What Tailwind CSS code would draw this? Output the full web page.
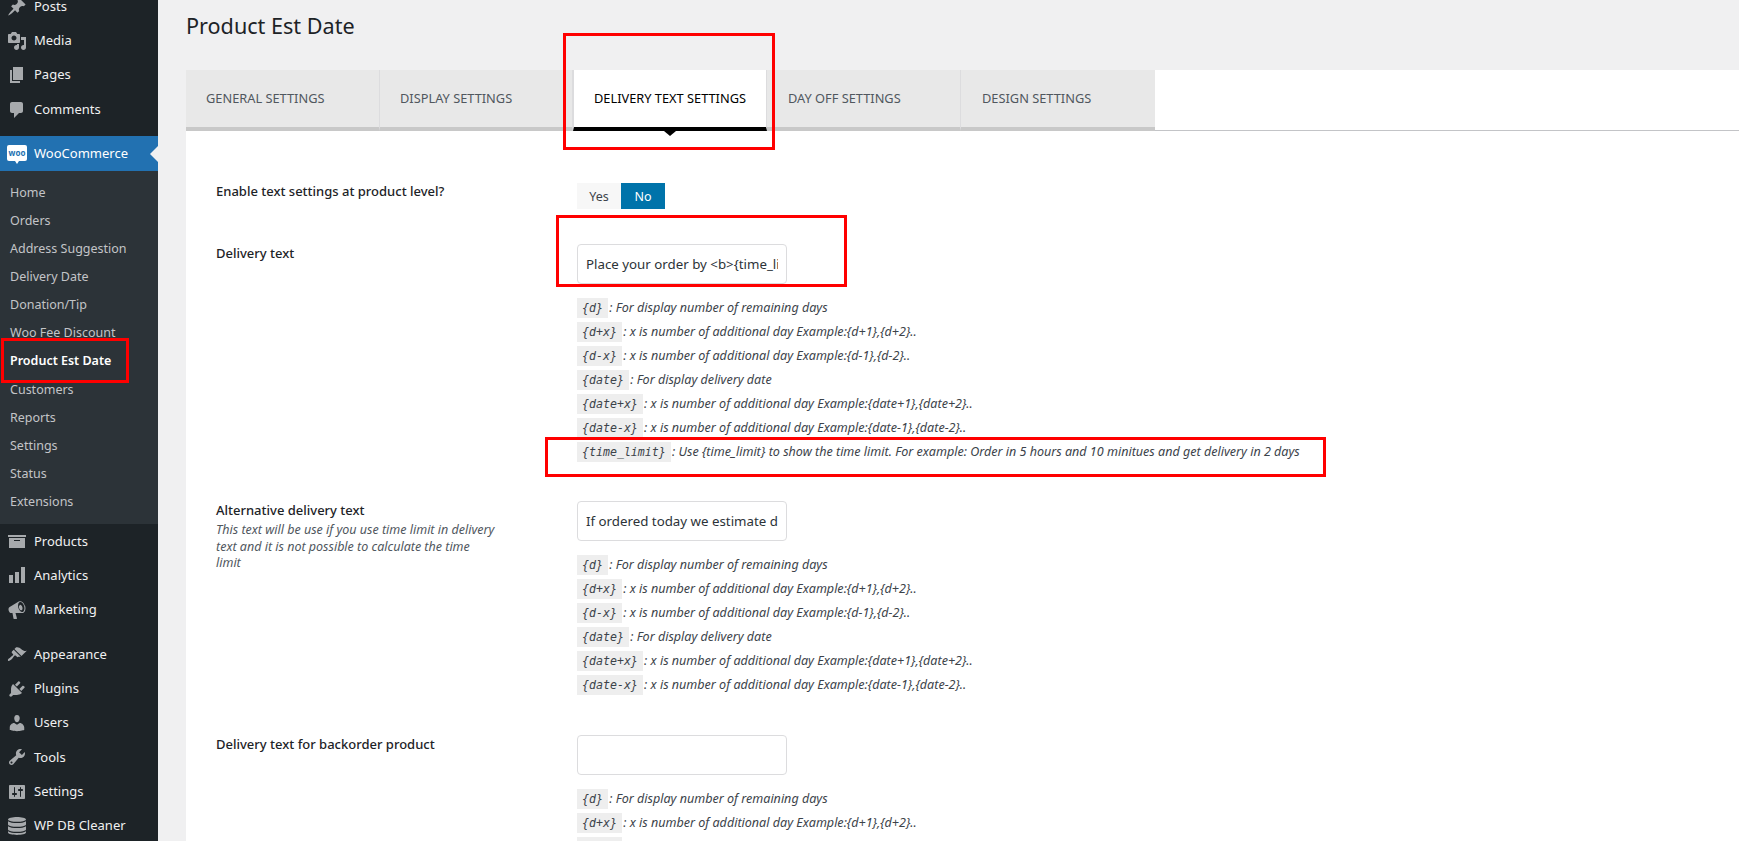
<!DOCTYPE html>
<html lang="en">
<head>
<meta charset="utf-8">
<title>Product Est Date</title>
<script src="https://cdn.jsdelivr.net/npm/@tailwindcss/browser@4"></script>
</head>
<body class="font-['Noto_Sans',sans-serif]">
<div class="relative flex h-[841px] w-[1739px] overflow-hidden bg-[#f0f0f1]">

  <aside class="h-full w-[158px] shrink-0 bg-[#1d2327] pt-0 text-[13px] text-[#f0f0f1]">
    <nav class="-mt-[10.5px]">
      <a class="flex h-[34.3px] items-center gap-[7px] pl-[7px]"><svg class="size-5 fill-[#a7aaad]" viewBox="0 0 20 20"><path d="M10.44 3.02l1.82-1.82 6.36 6.35-1.83 1.82c-1.05-.68-2.48-.57-3.41.36l-.75.75c-.92.93-1.04 2.35-.35 3.41l-1.83 1.82-2.41-2.41-2.8 2.79c-.42.42-3.38 2.71-3.8 2.29s1.86-3.39 2.28-3.81l2.79-2.79L4.1 9.36l1.83-1.82c1.05.69 2.48.57 3.4-.36l.75-.75c.93-.92 1.05-2.35.36-3.41z"/></svg>Posts</a>
      <a class="flex h-[34.3px] items-center gap-[7px] pl-[7px]"><svg class="size-5 fill-[#a7aaad]" viewBox="0 0 20 20"><path d="M13 11V4c0-.55-.45-1-1-1h-1.67L9 1H5L3.67 3H2c-.55 0-1 .45-1 1v7c0 .55.45 1 1 1h10c.55 0 1-.45 1-1zM7 4.500c1.38 0 2.500 1.120 2.500 2.500S8.380 9.500 7 9.500 4.500 8.380 4.500 7 5.620 4.500 7 4.500zM14 6h5v10.500c0 1.380-1.120 2.500-2.500 2.500S14 17.880 14 16.500s1.120-2.500 2.500-2.500c.17 0 .34.02.5.05V9h-3V6zm-4 8.050V13h2v3.500c0 1.380-1.120 2.500-2.500 2.500S7 17.880 7 16.500 8.120 14 9.500 14c.17 0 .34.02.5.05z"/></svg>Media</a>
      <a class="flex h-[34.3px] items-center gap-[7px] pl-[7px]"><svg class="size-5 fill-[#a7aaad]" viewBox="0 0 20 20"><path d="M6 15V2h10v13H6zm-1 1h8v2H3V5h2v11z"/></svg>Pages</a>
      <a class="flex h-[34.3px] items-center gap-[7px] pl-[7px]"><svg class="size-5 fill-[#a7aaad]" viewBox="0 0 20 20"><path d="M5 2h9c1.1 0 2 .9 2 2v7c0 1.1-.9 2-2 2h-2l-5 5v-5H5c-1.1 0-2-.9-2-2V4c0-1.1.9-2 2-2z"/></svg>Comments</a>
    </nav>
    <a class="relative mt-[9.5px] flex h-[35px] items-center gap-[7px] bg-[#2271b1] pl-[7px] text-white">
      <span class="relative -mt-[2px] flex h-[16px] w-5 items-center justify-center rounded-[2px] bg-white text-[8px] leading-none font-bold text-[#2271b1]">woo<span class="absolute -bottom-[3px] left-[8px] size-0 border-x-[2px] border-t-[3px] border-x-transparent border-t-white"></span></span>
      <span class="pt-px">WooCommerce</span>
      <span class="absolute top-1/2 right-0 size-0 -translate-y-1/2 border-y-[8px] border-r-[8px] border-y-transparent border-r-[#f0f0f1]"></span>
    </a>
    <ul class="h-[353px] bg-[#2c3338] pt-[8px] text-[12.5px] text-[#c3c4c7]">
      <li class="flex h-[28.1px] items-center pl-[10px]">Home</li>
      <li class="flex h-[28.1px] items-center pl-[10px]">Orders</li>
      <li class="flex h-[28.1px] items-center pl-[10px]">Address Suggestion</li>
      <li class="flex h-[28.1px] items-center pl-[10px]">Delivery Date</li>
      <li class="flex h-[28.1px] items-center pl-[10px]">Donation/Tip</li>
      <li class="flex h-[28.1px] items-center pl-[10px]">Woo Fee Discount</li>
      <li class="flex h-[28.1px] items-center pl-[10px] font-semibold text-white">Product Est Date</li>
      <li class="flex h-[28.1px] items-center pl-[10px]">Customers</li>
      <li class="flex h-[28.1px] items-center pl-[10px]">Reports</li>
      <li class="flex h-[28.1px] items-center pl-[10px]">Settings</li>
      <li class="flex h-[28.1px] items-center pl-[10px]">Status</li>
      <li class="flex h-[28.1px] items-center pl-[10px]">Extensions</li>
    </ul>
    <nav>
      <a class="flex h-[34.2px] items-center gap-[7px] pl-[7px]"><svg class="size-5 fill-[#a7aaad]" viewBox="0 0 20 20"><path d="M19 4v2H1V4h18zM2 7h16v10H2V7zm11 3V9H7v1h6z"/></svg>Products</a>
      <a class="flex h-[34.2px] items-center gap-[7px] pl-[7px]"><svg class="size-5 fill-[#a7aaad]" viewBox="0 0 20 20"><path d="M18 18V2h-4v16h4zm-6 0V7H8v11h4zm-6 0v-8H2v8h4z"/></svg>Analytics</a>
      <a class="flex h-[34.2px] items-center gap-[7px] pl-[7px]"><svg class="size-5 fill-[#a7aaad]" viewBox="0 0 20 20"><path d="M18.15 5.94c.46 1.62.38 3.22-.02 4.48-.42 1.28-1.26 2.18-2.3 2.48-.16.06-.26.06-.4.06-.06.02-.12.02-.18.02-.06.02-.14.02-.22.02H8.5l1.5 5.5c.02.14-.06.26-.14.34-.08.1-.24.16-.34.16H6.95c-.1 0-.26-.06-.34-.16-.08-.08-.16-.2-.14-.34l-1-5.5H4.25c-.5.06-1.08-.18-1.54-.62s-.88-1.08-1.06-1.88c-.24-.8-.2-1.56-.02-2.2.18-.62.58-1.08 1.06-1.3l9.02-5.42c.16-.1.46-.24.74-.3 1.04-.3 2.24.1 3.22.98s1.84 2.24 2.26 3.86zm-2.58 5.98c.4-.1.74-.34 1.04-.7.58-.7.86-1.76.86-3.04-.02-.64-.1-1.3-.28-1.98-.34-1.36-1.02-2.5-1.78-3.24s-1.68-1.1-2.46-.88c-.82.22-1.4.96-1.7 2-.32 1.04-.28 2.36.06 3.72.38 1.36 1 2.5 1.8 3.24.78.74 1.62 1.1 2.46.88zM13 4.9c.9-.25 2 .8 2.4 2.3s0 2.9-.9 3.1c-.9.25-2-.8-2.4-2.3s0-2.85.9-3.1z" fill-rule="evenodd"/></svg>Marketing</a>
    </nav>
    <nav class="pt-[11px]">
      <a class="flex h-[34.2px] items-center gap-[7px] pl-[7px]"><svg class="size-5 fill-[#a7aaad]" viewBox="0 0 20 20"><path d="M14.48 11.06L7.41 3.99l1.5-1.5c.5-.56 2.3-.47 3.51.32 1.21.8 1.43 1.28 2.91 2.1 1.18.64 2.45 1.26 4.45.85zm-.71.71L6.7 4.7 4.93 6.47c-.39.39-.39 1.02 0 1.41l1.06 1.06c.39.39.39 1.03 0 1.42-.6.6-1.43 1.11-2.21 1.69-.35.26-.7.53-1.01.84C1.43 13.23.4 14.98 1.1 15.68c.7.7 2.45-.33 3.79-1.67.31-.31.58-.66.85-1.01.57-.78 1.08-1.61 1.69-2.21.39-.39 1.02-.39 1.41 0l1.06 1.06c.4.39 1.03.39 1.42 0z"/></svg>Appearance</a>
      <a class="flex h-[34.2px] items-center gap-[7px] pl-[7px]"><svg class="size-5 fill-[#a7aaad]" viewBox="0 0 20 20"><path d="M13.11 4.36L9.87 7.6 8 5.73l3.24-3.24c.35-.34 1.05-.2 1.56.32.52.51.66 1.21.31 1.55zm-8 1.77l.91-1.12 9.01 9.01-1.19.84c-.71.71-2.63 1.16-3.82 1.16H6.14L4.9 17.26c-.59.59-1.54.59-2.12 0-.59-.58-.59-1.53 0-2.12l1.24-1.24v-3.88c0-1.13.4-3.19 1.09-3.89zm7.26 3.97l3.24-3.24c.34-.35 1.04-.21 1.55.31.52.51.66 1.21.31 1.55l-3.24 3.25z"/></svg>Plugins</a>
      <a class="flex h-[34.2px] items-center gap-[7px] pl-[7px]"><svg class="size-5 fill-[#a7aaad]" viewBox="0 0 20 20"><path d="M10 9.25c-2.27 0-2.73-3.44-2.73-3.44C7 4.02 7.82 2 9.97 2c2.16 0 2.98 2.02 2.71 3.81 0 0-.41 3.44-2.68 3.44zm0 2.57L12.72 10c2.39 0 4.52 2.33 4.52 4.53v2.49s-3.65 1.13-7.24 1.13c-3.65 0-7.24-1.13-7.24-1.13v-2.49c0-2.25 1.94-4.48 4.47-4.48z"/></svg>Users</a>
      <a class="flex h-[34.2px] items-center gap-[7px] pl-[7px]"><svg class="size-5 fill-[#a7aaad]" viewBox="0 0 20 20"><path d="M16.68 9.77c-1.34 1.34-3.3 1.67-4.95.99l-5.41 6.52c-.99.99-2.59.99-3.58 0s-.99-2.59 0-3.57l6.52-5.42c-.68-1.65-.35-3.61.99-4.95 1.28-1.28 3.12-1.62 4.72-1.06l-2.89 2.89 2.82 2.82 2.86-2.87c.53 1.58.18 3.39-1.08 4.65zM3.81 16.21c.4.39 1.04.39 1.43 0 .4-.4.4-1.04 0-1.43-.39-.4-1.03-.4-1.43 0-.39.39-.39 1.03 0 1.43z"/></svg>Tools</a>
      <a class="flex h-[34.2px] items-center gap-[7px] pl-[7px]"><svg class="size-5 fill-[#a7aaad]" viewBox="0 0 20 20"><path d="M18 16V4c0-.55-.45-1-1-1H3c-.55 0-1 .45-1 1v12c0 .55.45 1 1 1h14c.55 0 1-.45 1-1zM8 11h1c.55 0 1 .45 1 1s-.45 1-1 1H8v1.500c0 .28-.22.5-.5.5s-.5-.22-.5-.5V13H6c-.55 0-1-.45-1-1s.45-1 1-1h1V5.500c0-.28.22-.5.5-.5s.5.22.5.5V11zm5-2h-1c-.55 0-1-.45-1-1s.45-1 1-1h1V5.500c0-.28.22-.5.5-.5s.5.22.5.5V7h1c.55 0 1 .45 1 1s-.45 1-1 1h-1v5.500c0 .28-.22.5-.5.5s-.5-.22-.5-.5V9z"/></svg>Settings</a>
      <a class="flex h-[34.2px] items-center gap-[7px] pl-[7px]"><svg class="size-5 fill-[#a7aaad]" viewBox="0 0 20 20"><path d="M10 1c4.400 0 9 1 9 2.400S14.400 5.800 10 5.800 1 4.800 1 3.400 5.600 1 10 1zM1 5.200C2.500 6.500 6.500 7 10 7s7.500-.5 9-1.800v3.200c0 1.400-4.600 2.400-9 2.400s-9-1-9-2.400V5.200zm0 5C2.500 11.500 6.500 12 10 12s7.500-.5 9-1.800v3.200c0 1.400-4.600 2.400-9 2.400s-9-1-9-2.400v-3.200zm0 5C2.500 16.500 6.500 17 10 17s7.500-.5 9-1.800v1.400c0 1.400-4.600 2.400-9 2.400s-9-1-9-2.400v-1.400z"/></svg>WP DB Cleaner</a>
    </nav>
  </aside>

  <main class="min-w-0 flex-1 pl-[28px] text-[12.5px] text-[#3c434a]">
    <h1 class="h-[70px] pt-[9px] text-[21.6px] leading-[34px] text-[#1d2327]">Product Est Date</h1>
    <div class="flex h-[771px] flex-col bg-white">
      <div class="flex h-[61px] border-b border-[#c3c4c7]">
        <a class="flex h-[61px] w-[194px] items-center border-r border-b-[4px] border-r-[#dcdcde] border-b-[#c8c8c8] bg-[#e8e8e8] pt-px pl-5 text-[12.8px] text-[#50575e]">GENERAL SETTINGS</a>
        <a class="flex h-[61px] w-[193px] items-center border-r border-b-[4px] border-r-[#dcdcde] border-b-[#c8c8c8] bg-[#e8e8e8] pt-px pl-5 text-[12.8px] text-[#50575e]">DISPLAY SETTINGS</a>
        <a class="relative flex h-[61px] w-[194px] items-center border-x border-b-[4px] border-x-[#dcdcde] border-b-black bg-white pt-px pl-5 text-[12.8px] text-black">DELIVERY TEXT SETTINGS<span class="absolute -bottom-[9px] left-1/2 size-0 -translate-x-1/2 border-x-[6px] border-t-[5px] border-x-transparent border-t-black"></span></a>
        <a class="flex h-[61px] w-[194px] items-center border-r border-b-[4px] border-r-[#dcdcde] border-b-[#c8c8c8] bg-[#e8e8e8] pt-px pl-[21px] text-[12.8px] text-[#50575e]">DAY OFF SETTINGS</a>
        <a class="flex h-[61px] w-[194px] items-center border-b-[4px] border-b-[#c8c8c8] bg-[#e8e8e8] pt-px pl-[21px] text-[12.8px] text-[#50575e]">DESIGN SETTINGS</a>
      </div>

      <div class="flex flex-col pt-[52px] pl-[30px]">
        <section class="flex">
          <div class="w-[361px] shrink-0 text-[13px] leading-[16px] font-medium text-[#1d2327]">Enable text settings at product level?</div>
          <div class="flex h-[26px] w-[88px] text-center text-[12.5px] leading-[27px]">
            <span class="w-[44px] bg-[#f7f7f7]">Yes</span>
            <span class="w-[44px] bg-[#0073aa] text-white">No</span>
          </div>
        </section>

        <section class="mt-[35px] flex">
          <div class="w-[361px] shrink-0 pt-px text-[13px] leading-[16px] font-medium text-[#1d2327]">Delivery text</div>
          <div>
            <input class="h-10 w-[210px] rounded border border-[#dcdcde] bg-white px-2 text-[13.3px] text-[#2c3338]" value="Place your order by &lt;b&gt;{time_limit}&lt;/b&gt;">
            <div class="mt-[14px] text-[12.55px] italic">
              <p class="h-6 leading-[20px]"><code class="-mr-[2px] inline-block h-5 bg-[#eeeeee] px-[5px] font-['DejaVu_Sans_Mono',monospace] text-[11.6px] leading-[20px]">{d}</code> : For display number of remaining days</p>
              <p class="h-6 leading-[20px]"><code class="-mr-[2px] inline-block h-5 bg-[#eeeeee] px-[5px] font-['DejaVu_Sans_Mono',monospace] text-[11.6px] leading-[20px]">{d+x}</code> : x is number of additional day Example:{d+1},{d+2}..</p>
              <p class="h-6 leading-[20px]"><code class="-mr-[2px] inline-block h-5 bg-[#eeeeee] px-[5px] font-['DejaVu_Sans_Mono',monospace] text-[11.6px] leading-[20px]">{d-x}</code> : x is number of additional day Example:{d-1},{d-2}..</p>
              <p class="h-6 leading-[20px]"><code class="-mr-[2px] inline-block h-5 bg-[#eeeeee] px-[5px] font-['DejaVu_Sans_Mono',monospace] text-[11.6px] leading-[20px]">{date}</code> : For display delivery date</p>
              <p class="h-6 leading-[20px]"><code class="-mr-[2px] inline-block h-5 bg-[#eeeeee] px-[5px] font-['DejaVu_Sans_Mono',monospace] text-[11.6px] leading-[20px]">{date+x}</code> : x is number of additional day Example:{date+1},{date+2}..</p>
              <p class="h-6 leading-[20px]"><code class="-mr-[2px] inline-block h-5 bg-[#eeeeee] px-[5px] font-['DejaVu_Sans_Mono',monospace] text-[11.6px] leading-[20px]">{date-x}</code> : x is number of additional day Example:{date-1},{date-2}..</p>
              <p class="h-6 leading-[20px]"><code class="-mr-[2px] inline-block h-5 bg-[#eeeeee] px-[5px] font-['DejaVu_Sans_Mono',monospace] text-[11.6px] leading-[20px]">{time_limit}</code> : Use {time_limit} to show the time limit. For example: Order in 5 hours and 10 minitues and get delivery in 2 days</p>
            </div>
          </div>
        </section>

        <section class="mt-[35px] flex">
          <div class="w-[361px] shrink-0">
            <div class="text-[13px] leading-[18px] font-medium text-[#1d2327]">Alternative delivery text</div>
            <p class="mt-[3px] w-[281px] text-[12.5px] leading-[16.5px] text-[#50575e] italic">This text will be use if you use time limit in delivery text and it is not possible to calculate the time limit</p>
          </div>
          <div>
            <input class="h-10 w-[210px] rounded border border-[#dcdcde] bg-white px-2 text-[13.3px] text-[#2c3338]" value="If ordered today we estimate dispatch">
            <div class="mt-[14px] text-[12.55px] italic">
              <p class="h-6 leading-[20px]"><code class="-mr-[2px] inline-block h-5 bg-[#eeeeee] px-[5px] font-['DejaVu_Sans_Mono',monospace] text-[11.6px] leading-[20px]">{d}</code> : For display number of remaining days</p>
              <p class="h-6 leading-[20px]"><code class="-mr-[2px] inline-block h-5 bg-[#eeeeee] px-[5px] font-['DejaVu_Sans_Mono',monospace] text-[11.6px] leading-[20px]">{d+x}</code> : x is number of additional day Example:{d+1},{d+2}..</p>
              <p class="h-6 leading-[20px]"><code class="-mr-[2px] inline-block h-5 bg-[#eeeeee] px-[5px] font-['DejaVu_Sans_Mono',monospace] text-[11.6px] leading-[20px]">{d-x}</code> : x is number of additional day Example:{d-1},{d-2}..</p>
              <p class="h-6 leading-[20px]"><code class="-mr-[2px] inline-block h-5 bg-[#eeeeee] px-[5px] font-['DejaVu_Sans_Mono',monospace] text-[11.6px] leading-[20px]">{date}</code> : For display delivery date</p>
              <p class="h-6 leading-[20px]"><code class="-mr-[2px] inline-block h-5 bg-[#eeeeee] px-[5px] font-['DejaVu_Sans_Mono',monospace] text-[11.6px] leading-[20px]">{date+x}</code> : x is number of additional day Example:{date+1},{date+2}..</p>
              <p class="h-6 leading-[20px]"><code class="-mr-[2px] inline-block h-5 bg-[#eeeeee] px-[5px] font-['DejaVu_Sans_Mono',monospace] text-[11.6px] leading-[20px]">{date-x}</code> : x is number of additional day Example:{date-1},{date-2}..</p>
            </div>
          </div>
        </section>

        <section class="mt-9 flex">
          <div class="w-[361px] shrink-0 text-[13px] leading-[18px] font-medium text-[#1d2327]">Delivery text for backorder product</div>
          <div>
            <input class="h-10 w-[210px] rounded border border-[#dcdcde] bg-white px-2 text-[13.3px]" value="">
            <div class="mt-[14px] text-[12.55px] italic">
              <p class="h-6 leading-[20px]"><code class="-mr-[2px] inline-block h-5 bg-[#eeeeee] px-[5px] font-['DejaVu_Sans_Mono',monospace] text-[11.6px] leading-[20px]">{d}</code> : For display number of remaining days</p>
              <p class="h-6 leading-[20px]"><code class="-mr-[2px] inline-block h-5 bg-[#eeeeee] px-[5px] font-['DejaVu_Sans_Mono',monospace] text-[11.6px] leading-[20px]">{d+x}</code> : x is number of additional day Example:{d+1},{d+2}..</p>
              <p class="h-6 leading-[20px]"><code class="-mr-[2px] inline-block h-5 bg-[#eeeeee] px-[5px] font-['DejaVu_Sans_Mono',monospace] text-[11.6px] leading-[20px]">{d-x}</code> : x is number of additional day Example:{d-1},{d-2}..</p>
            </div>
          </div>
        </section>
      </div>
    </div>
  </main>

  <div class="pointer-events-none absolute top-[338px] left-px h-[45px] w-[128px] border-[3px] border-[#ff0000]"></div>
  <div class="pointer-events-none absolute top-[33px] left-[563px] h-[117px] w-[212px] border-[3px] border-[#ff0000]"></div>
  <div class="pointer-events-none absolute top-[215px] left-[556px] h-[72px] w-[291px] border-[3px] border-[#ff0000]"></div>
  <div class="pointer-events-none absolute top-[437px] left-[545px] h-10 w-[781px] border-[3px] border-[#ff0000]"></div>
</div>
</body>
</html>
